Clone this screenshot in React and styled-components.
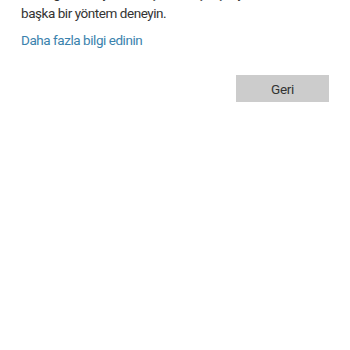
import styled, { createGlobalStyle } from "styled-components";

const GlobalStyle = createGlobalStyle`
    body {
        margin: 0;
        background: #ffffff;
        font-family: Roboto, "Noto Sans", sans-serif;
        overflow: hidden;
    }
`;

const Page = styled.div`
    width: 350px;
    height: 350px;
    overflow: hidden;
    background: #ffffff;
`;

// the view is scrolled a little, so the first line is cut at the top
const Content = styled.div`
    margin-top: -17px;
    padding: 0 21px;
`;

const Message = styled.p`
    margin: 0;
    font-size: 13.5px;
    letter-spacing: -0.45px;
    line-height: 20px;
    color: #333333;
`;

const LearnMore = styled.a`
    display: block;
    margin-top: 7px;
    font-size: 13.5px;
    letter-spacing: -0.45px;
    line-height: 20px;
    color: #3a82ad;
    text-decoration: none;
`;

const Actions = styled.div`
    display: flex;
    justify-content: flex-end;
    margin-top: 25px;
`;

const BackButton = styled.button`
    width: 93px;
    height: 27px;
    padding: 0;
    border: none;
    background: #cccccc;
    color: #333333;
    font-family: Roboto, "Noto Sans", sans-serif;
    font-size: 13.5px;
    letter-spacing: -0.3px;
    cursor: pointer;
`;

const App = () => {
    return (
        <Page>
            <GlobalStyle />
            <Content>
                <Message>
                    Bu doğrulama yöntemi şu anda çalışmıyor. Lütfen başka bir yöntem deneyin.
                </Message>
                <LearnMore href="#">Daha fazla bilgi edinin</LearnMore>
                <Actions>
                    <BackButton>Geri</BackButton>
                </Actions>
            </Content>
        </Page>
    );
};

export default App;
